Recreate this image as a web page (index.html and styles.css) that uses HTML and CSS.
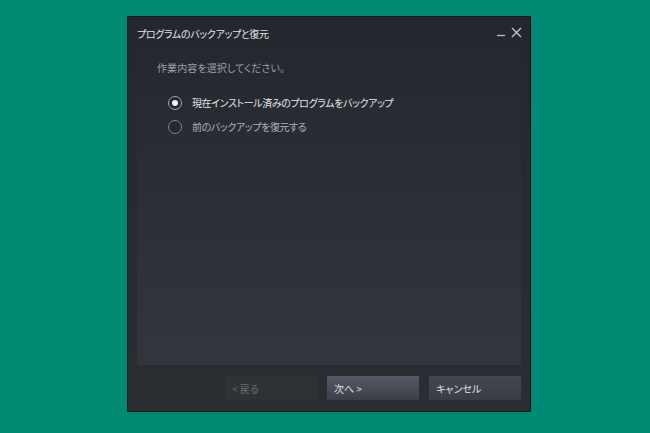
FILE: index.html
```html
<!DOCTYPE html>
<html lang="ja">
<head>
<meta charset="utf-8">
<link rel="stylesheet" href="styles.css">
</head>
<body>
<div class="dialog">
  <div class="titlebar">
    <span class="title">プログラムのバックアップと復元</span>
    <div class="controls">
      <svg class="ctl" width="10" height="10" viewBox="0 0 10 10"><path d="M1 8.5H9" stroke="#b9bdc2" stroke-width="1.3"/></svg>
      <svg class="ctl" width="11" height="11" viewBox="0 0 11 11"><path d="M1 1L10 10M10 1L1 10" stroke="#c3c7cc" stroke-width="1.4"/></svg>
    </div>
  </div>
  <div class="panel">
    <p class="lead">作業内容を選択してください。</p>
    <div class="options">
      <label class="opt on"><span class="radio"></span><span>現在インストール済みのプログラムをバックアップ</span></label>
      <label class="opt"><span class="radio"></span><span>前のバックアップを復元する</span></label>
    </div>
  </div>
  <div class="footer">
    <button class="btn disabled">&lt; 戻る</button>
    <button class="btn primary">次へ &gt;</button>
    <button class="btn">キャンセル</button>
  </div>
</div>
</body>
</html>
```

FILE: styles.css
```css
html, body { margin: 0; padding: 0; }
body {
  width: 650px;
  height: 433px;
  background: #008a74;
  font-family: "Noto Sans CJK JP", "Noto Sans", sans-serif;
  font-feature-settings: "palt";
  overflow: hidden;
}
.dialog {
  box-sizing: border-box;
  margin: 16px 0 0 127px;
  width: 404px;
  height: 396px;
  border: 1px solid #15171a;
  background: linear-gradient(#24272d, #2a2d32);
  display: flex;
  flex-direction: column;
  padding: 0 9px 11px 9px;
}
.titlebar {
  height: 33px;
  display: flex;
  align-items: center;
  justify-content: space-between;
}
.title {
  color: #e2e5e9;
  font-size: 10px;
  letter-spacing: -0.35px;
  padding-top: 0;
}
.controls { display: flex; gap: 5px; align-items: center; margin-right: -1px; margin-top: -3px; }
.ctl { display: block; }
.panel {
  flex: 1;
  background: linear-gradient(#25282e, #33363d);
  padding: 10px 0 0 20px;
}
.lead {
  margin: 0;
  color: #9aa0a8;
  font-size: 10px;
  letter-spacing: 0.1px;
  line-height: 16px;
}
.options { margin-top: 19px; margin-left: 11px; display: flex; flex-direction: column; gap: 8px; }
.opt {
  display: flex;
  align-items: center;
  gap: 10px;
  font-size: 10px;
  letter-spacing: -0.4px;
  line-height: 16px;
  color: #aeb2b8;
}
.opt.on { color: #e4e6e9; }
.radio {
  box-sizing: border-box;
  width: 14px;
  height: 14px;
  border-radius: 50%;
  border: 1.5px solid #80848a;
  background: #24272c;
  display: flex;
  align-items: center;
  justify-content: center;
}
.opt.on .radio { border-color: #a4a8ae; }
.opt.on .radio::after {
  content: "";
  width: 6px;
  height: 6px;
  border-radius: 50%;
  background: #f2f2f2;
}
.footer {
  display: flex;
  justify-content: flex-end;
  gap: 10px;
  padding-top: 11px;
}
.btn {
  width: 92px;
  height: 24px;
  border: 0;
  padding: 0 0 0 7px;
  text-align: left;
  font-family: inherit;
  font-feature-settings: "palt";
  font-size: 10px;
  color: #dfe2e6;
  background: linear-gradient(#434750, #3a3d45);
}
.btn.primary { background: linear-gradient(#555a65, #3b3f47); }
.btn.disabled { background: #2e3136; color: #6a6d73; }
```
